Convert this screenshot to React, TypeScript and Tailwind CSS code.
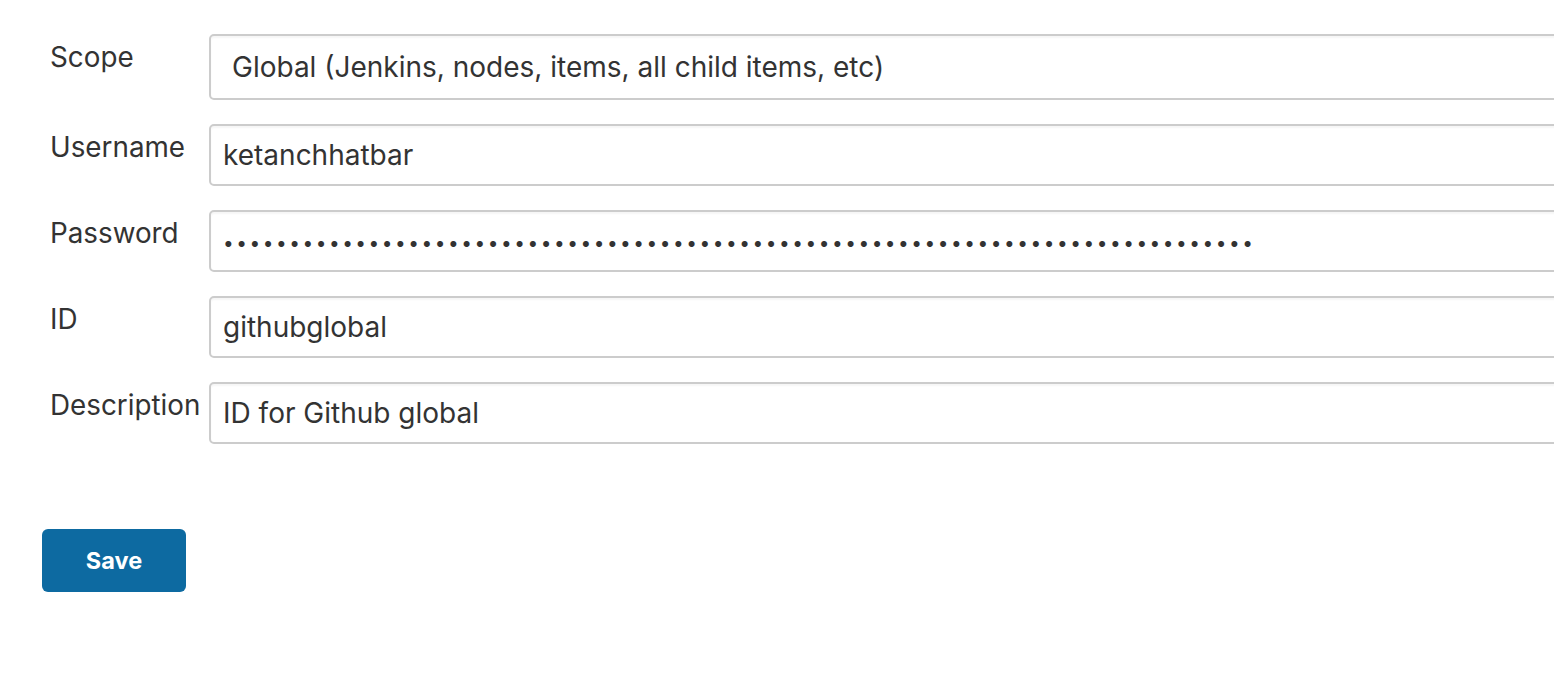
import React from "react";

const FONT = "font-['Inter','Noto_Sans',sans-serif]";

const fields = [
  { label: "Scope", value: "Global (Jenkins, nodes, items, all child items, etc)", kind: "select" },
  { label: "Username", value: "ketanchhatbar", kind: "text" },
  { label: "Password", value: "•".repeat(78), kind: "password" },
  { label: "ID", value: "githubglobal", kind: "text" },
  { label: "Description", value: "ID for Github global", kind: "text" },
];

function Field({ label, value, kind }: { label: string; value: string; kind: string }) {
  const isSelect = kind === "select";
  return (
    <div className="flex items-start">
      <label className="w-[209px] shrink-0 pl-[50px] pt-[7px] text-[27.8px] leading-[32px] text-[#333]">
        {label}
      </label>
      <div
        className={`flex w-[1400px] shrink-0 items-center rounded-[5px] border-2 border-[#cccccc] bg-white shadow-[inset_0_2px_2px_rgba(0,0,0,0.04)] ${
          isSelect ? "h-[66px] pl-[21px]" : "h-[62px] pl-[12px]"
        }`}
      >
        {kind === "password" ? (
          <span className="pt-[6px] text-[19px] tracking-[2.55px] text-[#333]">{value}</span>
        ) : (
          <span className="text-[28px] text-[#333]">{value}</span>
        )}
      </div>
    </div>
  );
}

export default function App() {
  return (
    <div className={`min-h-screen w-full overflow-hidden bg-white ${FONT}`}>
      <div className="flex flex-col gap-[24px] pt-[34px]">
        {fields.map((f) => (
          <Field key={f.label} {...f} />
        ))}
      </div>
      <div className="pl-[42px] pt-[85px]">
        <button
          type="button"
          className="h-[63px] w-[144px] rounded-[6px] bg-[#0d6aa1] text-[23.5px] font-bold text-white"
        >
          Save
        </button>
      </div>
    </div>
  );
}
